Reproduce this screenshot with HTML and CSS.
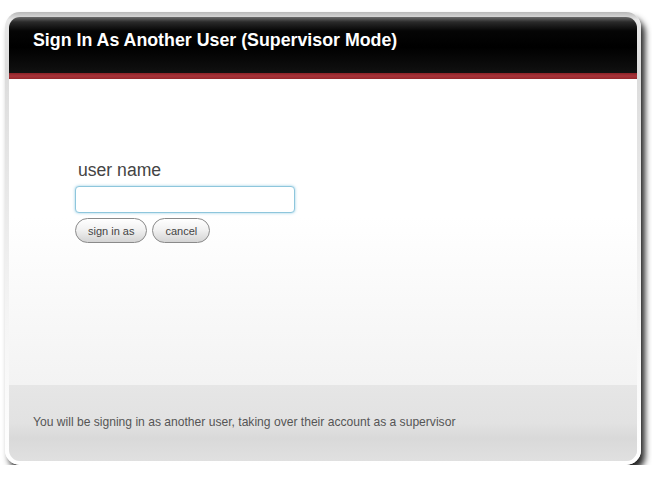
FILE: index.html
```html
<!DOCTYPE html>
<html>
<head>
<meta charset="utf-8">
<link rel="stylesheet" href="styles.css">
</head>
<body>
<div class="frame">
  <div class="panel">
    <div class="header"><h1 class="title">Sign In As Another User (Supervisor Mode)</h1></div>
    <div class="redbar"></div>
    <div class="content">
      <form class="form">
        <label class="label" for="u">user name</label>
        <input class="input" id="u" type="text">
        <div class="buttons">
          <button type="button" class="btn">sign in as</button>
          <button type="button" class="btn">cancel</button>
        </div>
      </form>
    </div>
    <div class="footer"><p class="note">You will be signing in as another user, taking over their account as a supervisor</p></div>
  </div>
</div>
</body>
</html>
```
FILE: styles.css
```css
html, body { margin: 0; padding: 0; background: #fff; }
body { font-family: "Liberation Sans", Arial, sans-serif; }
.frame {
  margin: 12px 0 0 5px;
  width: 636px;
  height: 453px;
  box-sizing: border-box;
  padding: 5px 4px 4px 4px;
  border-radius: 15px;
  background: linear-gradient(to bottom, #b8b8b8 0, #e8e8e8 8px, #dcdcdc 60px, #f4f4f4 300px, #ffffff 100%);
  box-shadow: 4px 6px 6px rgba(0,0,0,0.85);
}
.panel {
  height: 100%;
  border-radius: 11px;
  overflow: hidden;
  display: flex;
  flex-direction: column;
  position: relative;
  box-shadow: inset -5px 0 5px rgba(0,0,0,0.12);
}
.header {
  height: 56px;
  flex: none;
  background: linear-gradient(to bottom, #6a6a6a 0, #2a2a2a 5px, #050505 14px, #000 30px, #111 100%);
  display: flex;
  align-items: flex-start;
  padding-left: 24px;
}
.title {
  margin: 12px 0 0 0;
  font-size: 17.8px;
  line-height: 22px;
  font-weight: bold;
  color: #fff;
}
.redbar {
  height: 6px;
  flex: none;
  background: linear-gradient(to bottom, #8c2227, #a8343a 50%, #94272c);
}
.content {
  flex: 1;
  background: linear-gradient(to bottom, #ffffff 0, #ffffff 45%, #f3f3f3 100%);
  padding: 81px 0 0 66px;
}
.form { display: flex; flex-direction: column; align-items: flex-start; margin: 0; }
.label {
  font-size: 17.6px;
  line-height: 21px;
  color: #444;
  margin-left: 3px;
  margin-bottom: 5px;
}
.input {
  width: 220px;
  height: 27px;
  box-sizing: border-box;
  border: 1px solid #8ec6dc;
  border-radius: 4px;
  box-shadow: 0 0 3px rgba(120,190,220,0.8);
  background: #fff;
  margin: 0;
  outline: none;
}
.buttons { display: flex; gap: 5px; margin-top: 5px; }
.btn {
  height: 25px;
  padding: 0 12px;
  border: 1px solid #8a8a8a;
  border-radius: 13px;
  background: linear-gradient(to bottom, #ffffff 0, #f2f2f2 45%, #d4d4d4 100%);
  font-family: "Liberation Sans", Arial, sans-serif;
  font-size: 11px;
  color: #444;
  margin: 0;
}
.footer {
  height: 76px;
  flex: none;
  background: linear-gradient(to bottom, #e6e6e6 0, #e2e2e2 50%, #d9d9d9 70%, #e0e0e0 100%);
  display: flex;
  align-items: center;
  padding-left: 24px;
}
.note {
  margin: 0 0 2px 0;
  font-size: 12.1px;
  color: #555;
}
```
